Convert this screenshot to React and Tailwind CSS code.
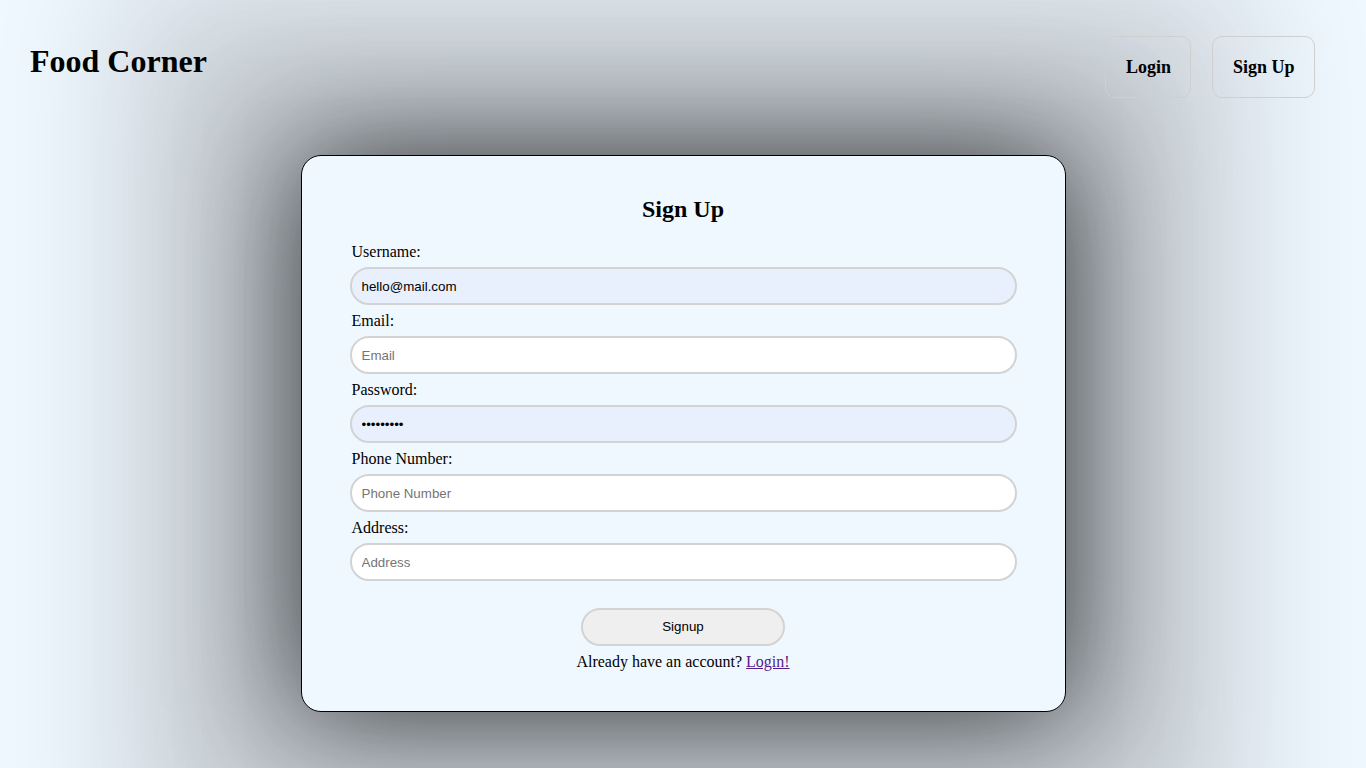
import React from "react";

const serif = { fontFamily: '"Liberation Serif", "Times New Roman", serif' };

function Field({ label, placeholder, value, type = "text", autofill }) {
  return (
    <div className="flex flex-col mb-[5px]">
      <label className="block pl-[2px] leading-[18px] text-[16px] mt-[2px] mb-[6px] text-black">{label}</label>
      <input
        type={type}
        placeholder={placeholder}
        defaultValue={value}
        className={`h-[38px] w-full rounded-full border-2 border-[#d3d3d3] px-[10px] text-[13.33px] text-black placeholder:text-[#757575] outline-none ${
          autofill ? "bg-[#e8f0fe]" : "bg-white"
        }`}
        style={{ fontFamily: '"Liberation Sans", Arial, sans-serif' }}
      />
    </div>
  );
}

export default function App() {
  return (
    <div className="min-h-screen w-full bg-[#f0f8ff] text-black" style={serif}>
      <header className="flex justify-between items-start pl-[30px] pr-[51px]">
        <h1 className="mt-[43px] text-[32px] font-bold leading-[37px]">Food Corner</h1>
        <nav className="flex gap-[21px] mt-[36px]">
          <button className="bg-transparent border border-[#cfcfcf] rounded-[10px] px-[19.5px] py-[20px] text-[18px] font-bold leading-[20px]" style={serif}>
            Login
          </button>
          <button className="bg-transparent border border-[#cfcfcf] rounded-[10px] px-[19.5px] py-[20px] text-[18px] font-bold leading-[20px]" style={serif}>
            Sign Up
          </button>
        </nav>
      </header>

      <div className="mx-auto mt-[57px] w-[765px] rounded-[20px] border border-black bg-[#f0f8ff] shadow-[0_0_120px_200px_rgba(0,0,0,0.11),0_0_120px_100px_rgba(0,0,0,0.135),0_0_120px_0_rgba(0,0,0,0.71)] px-[48px] pt-[39px] pb-[40px]">
        <h2 className="text-center text-[24px] font-bold leading-[28px] mb-[18px]">Sign Up</h2>
        <Field label="Username:" value="hello@mail.com" autofill />
        <Field label="Email:" placeholder="Email" type="email" />
        <Field label="Password:" value="123456789" type="password" autofill />
        <Field label="Phone Number:" placeholder="Phone Number" />
        <Field label="Address:" placeholder="Address" />
        <div className="flex flex-col items-center pt-[22px]">
          <button
            className="h-[38px] w-[204px] rounded-full border-2 border-[#d3d3d3] bg-[#efefef] text-[13.33px] text-black"
            style={{ fontFamily: '"Liberation Sans", Arial, sans-serif' }}
          >
            Signup
          </button>
          <p className="mt-[6px] text-[16px] leading-[19px]">
            Already have an account?{" "}
            <a href="#" className="text-[#551a8b] underline">
              Login!
            </a>
          </p>
        </div>
      </div>
    </div>
  );
}
